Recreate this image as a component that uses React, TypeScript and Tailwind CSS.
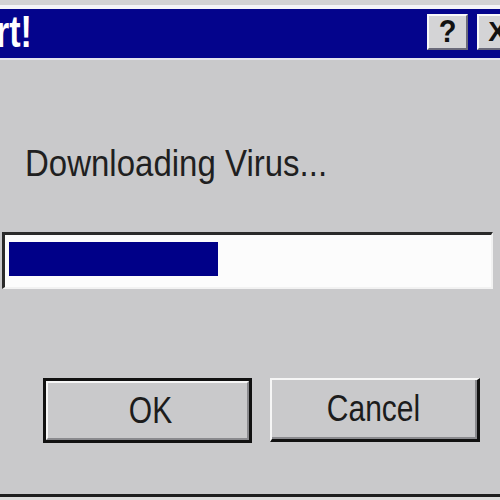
import React from "react";

export default function App() {
  return (
    <div
      className="w-[500px] h-[500px] overflow-hidden flex flex-col bg-[#c9c9cb]"
      style={{ fontFamily: '"Liberation Sans", Arial, sans-serif' }}
    >
      {/* top window frame */}
      <div className="h-[5px] bg-[#d2d2d4] shrink-0" />
      <div className="h-[4px] bg-[#f4f4f8] shrink-0" />
      {/* title bar */}
      <div className="h-[49px] shrink-0 bg-[#04048c] flex items-start pt-[5px]">
        <span className="ml-[-57px] text-[34px] leading-[34px] font-bold text-white inline-block scale-y-[1.3] whitespace-nowrap">
          Alert!
        </span>
        <div className="flex-1" />
        <div className="flex gap-[9px] mr-[-18px]">
          <div className="w-[41px] h-[36px] bg-[#d4d4d6] border-t-2 border-l-2 border-t-[#f8f8f8] border-l-[#f8f8f8] border-r-2 border-b-2 border-r-[#6a6a7a] border-b-[#6a6a7a] flex items-center justify-center">
            <span className="text-[29px] leading-[29px] font-bold text-[#111] inline-block scale-y-[1.05]">?</span>
          </div>
          <div className="w-[41px] h-[36px] bg-[#d4d4d6] border-t-2 border-l-2 border-t-[#f8f8f8] border-l-[#f8f8f8] border-r-2 border-b-2 border-r-[#6a6a7a] border-b-[#6a6a7a] flex items-center justify-center">
            <span className="text-[28px] leading-[28px] font-bold text-[#111]">X</span>
          </div>
        </div>
      </div>
      <div className="h-[2px] bg-[#e4e4ee] shrink-0" />
      {/* body */}
      <div className="flex-1 flex flex-col">
        <div className="pt-[86px] pl-[25px]">
          <span className="text-[33px] leading-[33px] text-[#1f1f21] inline-block scale-y-[1.14] whitespace-nowrap">
            Downloading Virus...
          </span>
        </div>
        {/* progress bar */}
        <div className="mt-[51px] ml-[2px] w-[491px] h-[57px] bg-[#fcfcfc] border-t-[3px] border-l-[3px] border-t-[#2a2a2a] border-l-[#2a2a2a] border-r-2 border-b-2 border-r-[#f2f2f2] border-b-[#f2f2f2] pt-[7px] pl-[4px]">
          <div className="w-[209px] h-[34px] bg-[#000088]" />
        </div>
        {/* buttons */}
        <div className="mt-[89px] flex pl-[43px] gap-[18px]">
          <div className="w-[209px] h-[65px] border-[3px] border-[#111] flex">
            <div className="flex-1 border-t-2 border-l-2 border-t-[#f6f6f6] border-l-[#f6f6f6] border-r-2 border-b-2 border-r-[#8a8a8e] border-b-[#8a8a8e] flex items-center justify-center pl-[6px]">
              <span className="text-[30px] leading-[30px] text-[#1c1c1c] inline-block scale-y-[1.2]">OK</span>
            </div>
          </div>
          <div className="w-[210px] h-[64px] border-t-2 border-l-2 border-t-[#f6f6f6] border-l-[#f6f6f6] border-r-[3px] border-b-[3px] border-r-[#111] border-b-[#111] flex">
            <div className="flex-1 border-r-2 border-b-2 border-r-[#8a8a8e] border-b-[#8a8a8e] flex items-center justify-center">
              <span className="text-[30px] leading-[30px] text-[#1c1c1c] inline-block scale-y-[1.2]">Cancel</span>
            </div>
          </div>
        </div>
        <div className="flex-1" />
      </div>
      <div className="h-[3px] bg-[#1e1e1e] shrink-0" />
      <div className="h-[3px] bg-[#dcdcdc] shrink-0" />
    </div>
  );
}
